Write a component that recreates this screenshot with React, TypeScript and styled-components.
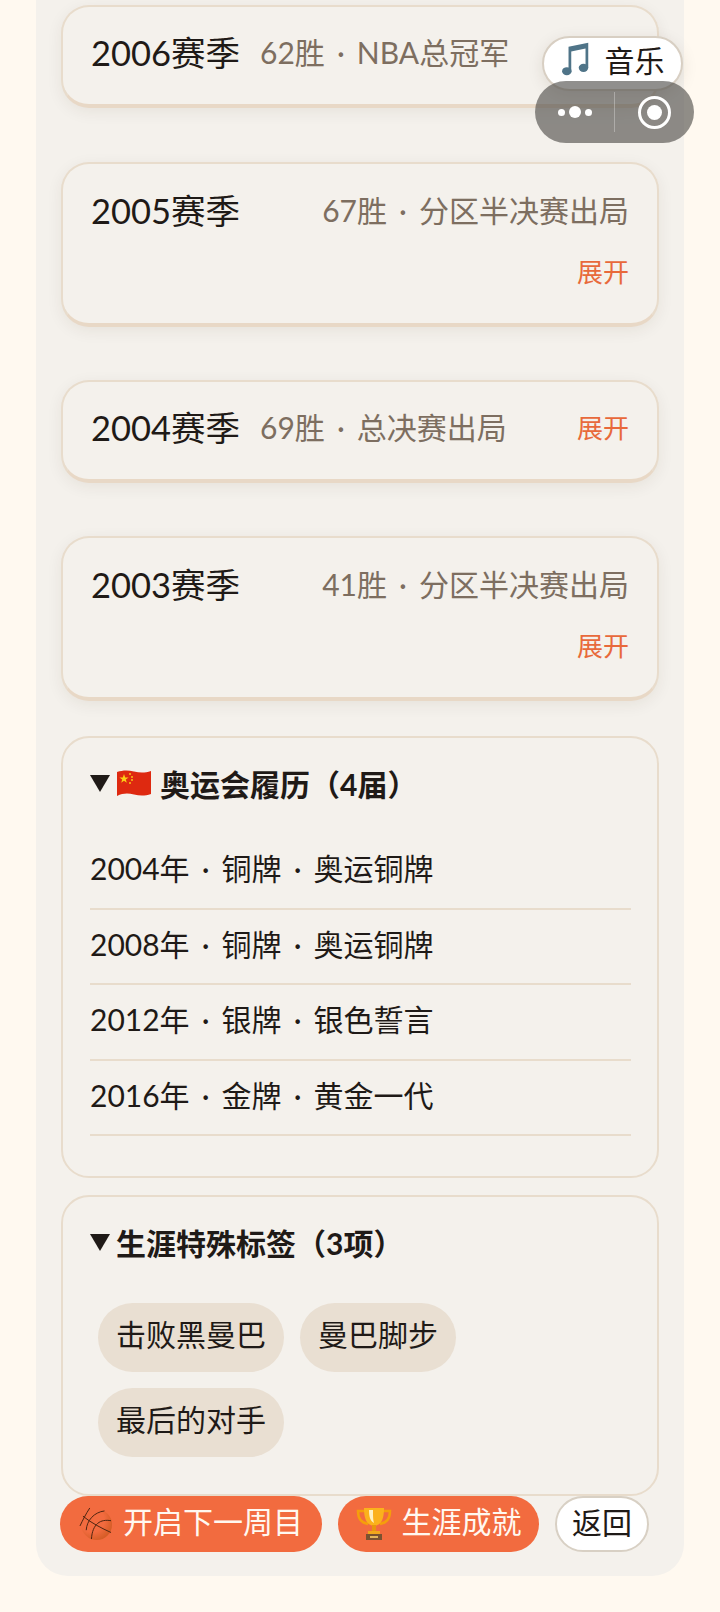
import React from 'react';
import styled, { createGlobalStyle } from 'styled-components';

const GlobalStyle = createGlobalStyle`
  html, body {
    margin: 0;
    padding: 0;
    background: #fff9f0;
  }
  body {
    font-family: Lato, "Noto Sans CJK SC", "Noto Sans", sans-serif;
    color: #1f1a17;
  }
  * { box-sizing: border-box; }
`;

const Page = styled.div`
  position: relative;
  width: 720px;
  height: 1612px;
  overflow: hidden;
  padding: 0 36px;
`;

const Panel = styled.div`
  height: 1576px;
  background: #f4f1ec;
  border-radius: 0 0 32px 32px;
  padding: 5px 25px 0;
  display: flex;
  flex-direction: column;
`;

const SeasonCard = styled.div<{ $tall?: boolean; $gap?: number }>`
  height: ${p => (p.$tall ? 165 : 103)}px;
  margin-bottom: ${p => p.$gap ?? 54}px;
  padding: ${p => (p.$tall ? 23 : 22)}px 28px 0;
  background: #f4f1ec;
  border: 2px solid #e8dccc;
  border-bottom: 4px solid #e8d8c6;
  border-radius: 28px;
  box-shadow: 0 4px 16px rgba(60, 40, 20, 0.07);
`;

const SeasonRow = styled.div`
  display: flex;
  align-items: center;
  justify-content: space-between;
  height: 44px;
`;

const SeasonName = styled.span`
  font-size: 34.5px;
  white-space: nowrap;
`;

const SeasonInfo = styled.span`
  font-size: 30px;
  color: #7d6e60;
  white-space: nowrap;
  flex: 1;
  text-align: right;
`;

const SeasonInfoLeft = styled(SeasonInfo)`
  text-align: left;
  margin-left: 20px;
`;

const Sep = styled.span`
  display: inline-block;
  width: 32px;
  text-align: center;
`;

const Toggle = styled.span`
  font-size: 26px;
  color: #e8693b;
  white-space: nowrap;
`;

const ToggleRow = styled.div`
  display: flex;
  justify-content: flex-end;
  margin-top: 21px;
`;

const FoldCard = styled.div<{ $height: number; $gap: number }>`
  height: ${p => p.$height}px;
  margin-bottom: ${p => p.$gap}px;
  padding: 23px 26px 0 27px;
  border: 2px solid #e8dccc;
  border-radius: 28px;
  background: #f4f1ec;
`;

const FoldTitle = styled.div`
  display: flex;
  align-items: center;
  height: 44px;
  font-size: 30px;
  font-weight: 700;
  white-space: nowrap;
`;

const Caret = styled.svg`
  width: 20px;
  height: 18px;
  margin-right: 6px;
  flex: none;
`;

const Flag = styled.svg`
  width: 36px;
  height: 30px;
  margin-right: 8px;
  flex: none;
`;

const HonorList = styled.div`
  margin-top: 29px;
`;

const HonorRow = styled.div`
  height: 75.6px;
  padding-top: 12px;
  font-size: 30px;
  line-height: 44px;
  border-bottom: 2px solid #e8dccc;
  white-space: nowrap;
`;

const TagWrap = styled.div`
  display: flex;
  flex-wrap: wrap;
  gap: 16px;
  margin: 39px 0 0 8px;
`;

const Tag = styled.span`
  height: 69px;
  padding: 0 18px 10px;
  display: flex;
  align-items: center;
  font-size: 30px;
  background: #e9dfd2;
  border-radius: 35px;
  white-space: nowrap;
`;

const ButtonBar = styled.div`
  display: flex;
  gap: 16px;
  margin-left: -1px;
`;

const PrimaryButton = styled.div<{ $width: number }>`
  width: ${p => p.$width}px;
  height: 56px;
  display: flex;
  align-items: center;
  justify-content: center;
  gap: 10px;
  background: #f26b3f;
  color: #fff8f0;
  font-size: 30px;
  border-radius: 28px;
  white-space: nowrap;
`;

const ButtonLabel = styled.span`
  position: relative;
  top: -4px;
`;

const BackButton = styled.div`
  width: 94px;
  height: 56px;
  padding-bottom: 6px;
  display: flex;
  align-items: center;
  justify-content: center;
  background: #fff;
  border: 2px solid #d8d0c4;
  border-radius: 28px;
  font-size: 30px;
`;

const MusicPill = styled.div`
  position: absolute;
  left: 542px;
  top: 36px;
  width: 141px;
  height: 55px;
  padding-bottom: 9px;
  display: flex;
  align-items: center;
  justify-content: center;
  gap: 15px;
  background: #fff;
  border: 2px solid #d8cfc3;
  border-radius: 28px;
  font-size: 30px;
  box-shadow: 0 4px 16px rgba(60, 40, 20, 0.1);
`;

const Capsule = styled.div`
  position: absolute;
  left: 535px;
  top: 81px;
  width: 159px;
  height: 62px;
  display: flex;
  align-items: center;
  background: rgba(70, 68, 65, 0.6);
  border-radius: 31px;
`;

const CapsuleSide = styled.div`
  flex: 1;
  height: 40px;
  display: flex;
  align-items: center;
  justify-content: center;
  gap: 4px;
`;

const CapsuleDivider = styled.div`
  width: 1px;
  height: 40px;
  background: rgba(255, 255, 255, 0.3);
`;

const Dot = styled.span<{ $size: number }>`
  width: ${p => p.$size}px;
  height: ${p => p.$size}px;
  border-radius: 50%;
  background: #fff;
`;

const Ring = styled.span`
  width: 33px;
  height: 33px;
  border: 3px solid #fff;
  border-radius: 50%;
  display: flex;
  align-items: center;
  justify-content: center;
  &::after {
    content: '';
    width: 15px;
    height: 15px;
    border-radius: 50%;
    background: #fff;
  }
`;

const CaretIcon = () => (
  <Caret viewBox="0 0 20 18">
    <path d="M0 1h20L10 18z" fill="#1f1a17" />
  </Caret>
);

const ChinaFlag = () => (
  <Flag viewBox="0 0 36 30">
    <path d="M1 4c6-2 11-2 17-.5s11 1.500 17-.5v23c-6 2-11 2-17 .5S7 25 1 28z" fill="#de2910" />
    <path d="M8 6l1.200 3.400h3.400l-2.800 2 1 3.400L8 12.800l-2.800 2 1-3.400-2.800-2h3.400z" fill="#fcd116" />
    <circle cx="14" cy="6" r=".9" fill="#fcd116" />
    <circle cx="16" cy="9" r=".9" fill="#fcd116" />
    <circle cx="16" cy="12" r=".9" fill="#fcd116" />
    <circle cx="14" cy="15" r=".9" fill="#fcd116" />
  </Flag>
);

const MusicNote = () => (
  <svg width="29" height="34" viewBox="0 0 85 100" fill="#4f7488">
    <path d="M22 14L80 2V76H72V19L30 28V86H22z" />
    <ellipse cx="17" cy="86" rx="14" ry="12" />
    <ellipse cx="66" cy="76" rx="14" ry="12" />
  </svg>
);

const Basketball = () => (
  <svg width="34" height="34" viewBox="14 14 104 104" fill="none">
    <defs>
      <radialGradient id="ball" cx="0.35" cy="0.35" r="0.8">
        <stop offset="0.5" stopColor="#f26b3f" />
        <stop offset="1" stopColor="#c9571c" />
      </radialGradient>
    </defs>
    <circle cx="68" cy="68" r="47" fill="url(#ball)" />
    <g stroke="#4b2410" strokeWidth="3">
      <path d="M47 17C35 35 25 55 17 72" />
      <path d="M26 42C50 62 85 80 112 92" />
      <path d="M112 56C80 50 55 65 52 112" />
      <path d="M92 26C60 30 38 55 36 85" />
    </g>
  </svg>
);

const Trophy = () => (
  <svg width="36" height="34" viewBox="0 0 36 34" fill="none">
    <path d="M9 4H2c0 8 4 12 10 13M27 4h7c0 8-4 12-10 13" stroke="#f59e0b" strokeWidth="2.500" />
    <path d="M8 1h20c0 10-2 17-10 18C10 18 8 11 8 1z" fill="#fbb11c" />
    <path d="M13 3h4c0 6 0 9 1 13-4-2-5-7-5-13z" fill="#fff1c4" />
    <rect x="16" y="18" width="4" height="7" fill="#e8950f" />
    <rect x="12" y="24" width="12" height="3" fill="#f2a71b" />
    <rect x="10" y="27" width="16" height="6" fill="#7a5230" />
    <rect x="14" y="29" width="8" height="2" fill="#e5b75a" />
  </svg>
);

const seasonsTop = [
  { name: '2006赛季', wins: '62胜', result: 'NBA总冠军', inline: true, toggle: false },
  { name: '2005赛季', wins: '67胜', result: '分区半决赛出局', inline: false, toggle: true },
  { name: '2004赛季', wins: '69胜', result: '总决赛出局', inline: true, toggle: true },
  { name: '2003赛季', wins: '41胜', result: '分区半决赛出局', inline: false, toggle: true }
];

const honors = [
  ['2004年', '铜牌', '奥运铜牌'],
  ['2008年', '铜牌', '奥运铜牌'],
  ['2012年', '银牌', '银色誓言'],
  ['2016年', '金牌', '黄金一代']
];

const tags = ['击败黑曼巴', '曼巴脚步', '最后的对手'];

export default function App() {
  return (
    <Page>
      <GlobalStyle />
      <Panel>
        {seasonsTop.map((s, i) =>
          s.inline ? (
            <SeasonCard key={s.name} $gap={i === 2 ? 53 : 54}>
              <SeasonRow>
                <SeasonName>{s.name}</SeasonName>
                <SeasonInfoLeft>
                  {s.wins}
                  <Sep>·</Sep>
                  {s.result}
                </SeasonInfoLeft>
                {s.toggle && <Toggle>展开</Toggle>}
              </SeasonRow>
            </SeasonCard>
          ) : (
            <SeasonCard key={s.name} $tall $gap={i === 3 ? 35 : 53}>
              <SeasonRow>
                <SeasonName>{s.name}</SeasonName>
                <SeasonInfo>
                  {s.wins}
                  <Sep>·</Sep>
                  {s.result}
                </SeasonInfo>
              </SeasonRow>
              <ToggleRow>
                <Toggle>展开</Toggle>
              </ToggleRow>
            </SeasonCard>
          )
        )}
        <FoldCard $height={442} $gap={17}>
          <FoldTitle>
            <CaretIcon />
            <ChinaFlag />
            奥运会履历（4届）
          </FoldTitle>
          <HonorList>
            {honors.map(h => (
              <HonorRow key={h[0]}>
                {h[0]}
                <Sep>·</Sep>
                {h[1]}
                <Sep>·</Sep>
                {h[2]}
              </HonorRow>
            ))}
          </HonorList>
        </FoldCard>
        <FoldCard $height={301} $gap={0}>
          <FoldTitle>
            <CaretIcon />
            生涯特殊标签（3项）
          </FoldTitle>
          <TagWrap>
            {tags.map(t => (
              <Tag key={t}>{t}</Tag>
            ))}
          </TagWrap>
        </FoldCard>
        <ButtonBar>
          <PrimaryButton $width={262}>
            <Basketball />
            <ButtonLabel>开启下一周目</ButtonLabel>
          </PrimaryButton>
          <PrimaryButton $width={201}>
            <Trophy />
            <ButtonLabel>生涯成就</ButtonLabel>
          </PrimaryButton>
          <BackButton>返回</BackButton>
        </ButtonBar>
      </Panel>
      <MusicPill>
        <MusicNote />
        音乐
      </MusicPill>
      <Capsule>
        <CapsuleSide>
          <Dot $size={7} />
          <Dot $size={12} />
          <Dot $size={7} />
        </CapsuleSide>
        <CapsuleDivider />
        <CapsuleSide>
          <Ring />
        </CapsuleSide>
      </Capsule>
    </Page>
  );
}
